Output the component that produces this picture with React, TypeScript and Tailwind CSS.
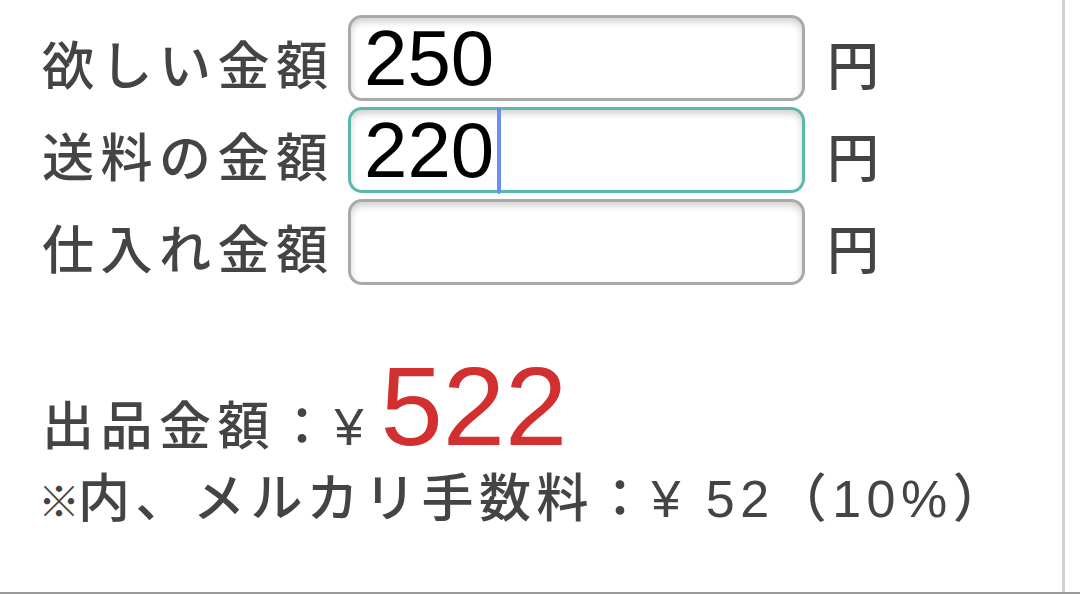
const FONT = 'font-["Liberation_Sans","Noto_Sans_CJK_JP",sans-serif]';

function Field({ value, focused }: { value: string; focused?: boolean }) {
  return (
    <div className="relative shrink-0">
      <input
        type="text"
        readOnly
        value={value}
        className={`${FONT} block h-[86px] w-[457px] rounded-[14px] border-[3px] bg-white pl-[13px] text-[78px] leading-none text-black outline-none shadow-[inset_0_4px_7px_rgba(0,0,0,0.18)] ${
          focused ? 'border-[#5cb8ab]' : 'border-[#a9a9a9]'
        }`}
      />
      {focused && <span className="absolute left-[149px] top-0 h-[87px] w-[4px] rounded-sm bg-[#6b8ef0]" />}
    </div>
  );
}

function Row({ label, value, focused }: { label: string; value: string; focused?: boolean }) {
  return (
    <div className="flex items-baseline">
      <span className="w-[306px] shrink-0 text-[52px] font-medium leading-none tracking-[6.5px] text-[#444]">{label}</span>
      <Field value={value} focused={focused} />
      <span className="ml-[22px] text-[52px] font-medium leading-none text-[#444]">円</span>
    </div>
  );
}

export default function App() {
  return (
    <div className={`${FONT} h-[594px] w-[1080px] border-b-2 border-[#9a9a9a] bg-white`}>
      <div className="h-full w-[1065px] border-r-[3px] border-[#d2d2d2] pl-[42px] pt-[15px]">
        <div className="flex flex-col gap-[6px]">
          <Row label="欲しい金額" value="250" />
          <Row label="送料の金額" value="220" focused />
          <Row label="仕入れ金額" value="" />
        </div>

        <div className="mt-[66px] flex items-baseline font-medium text-[#444]">
          <span className="text-[52px] leading-none tracking-[6.5px]">出品金額：</span>
          <span className="text-[52px] leading-none">¥</span>
          <span className="ml-[17px] text-[112px] leading-none text-[#d23030]">522</span>
        </div>

        <div className="mt-[10px] flex items-baseline text-[52px] font-medium leading-none tracking-[5.5px] text-[#444]">
          <span className="-ml-[4px] inline-block w-[40px] shrink-0 text-[42px] font-bold tracking-normal">※</span>
          <span>内、メルカリ手数料：¥ 52（10%）</span>
        </div>
      </div>
    </div>
  );
}
